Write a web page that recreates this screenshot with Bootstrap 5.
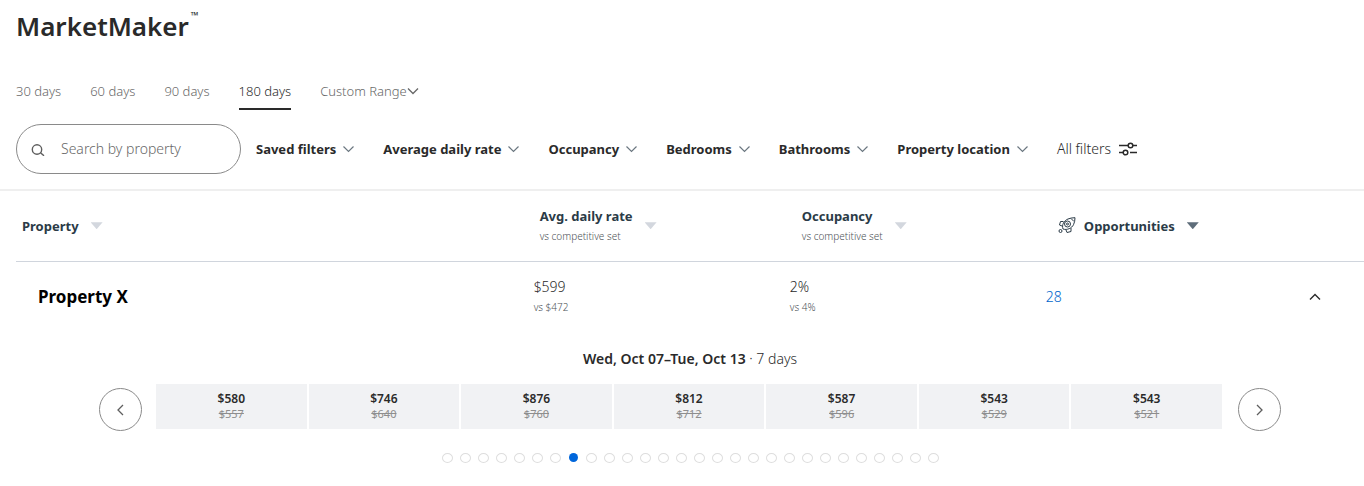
<!DOCTYPE html>
<html lang="en">
<head>
<meta charset="utf-8">
<meta name="viewport" content="width=device-width, initial-scale=1">
<title>MarketMaker</title>
<link href="https://cdn.jsdelivr.net/npm/bootstrap@5.3.0/dist/css/bootstrap.min.css" rel="stylesheet">
<style>
  body { font-family: "Noto Sans", "Open Sans", sans-serif; font-size: 14px; font-weight: 300; line-height: 20px; color: #2a2a2a; }
  svg { display: block; flex: none; fill: none; stroke: currentColor; }
  button { font: inherit; color: inherit; background: none; border: 0; padding: 0; }
  .page-head { padding-top: 10px; }
  .brand-title { font-size: 26px; font-weight: 600; line-height: 32px; }
  .brand-title sup { font-size: 10px; top: -17px; margin-left: 2px; font-weight: 400; }
  .range-tabs { gap: 29px; margin-top: 39px; font-size: 13px; color: #686868; }
  .range-tabs button { padding-bottom: 7px; border-bottom: 2px solid transparent; }
  .range-tabs .active { color: #2a2a2a; border-color: #2a2a2a; }
  .filter-bar { padding: 14px 16px 15px; border-bottom: 2px solid #efefef; gap: 29px; }
  .search-pill { width: 225px; height: 50px; margin-right: -14px; padding: 0 14px; gap: 16px; border: 1px solid #8a8a8a; color: #5e5e5e; }
  .search-pill input { font-weight: 300; color: inherit; outline: 0; }
  .search-pill input::placeholder { color: #686868; opacity: 1; }
  .filter-btn { font-size: 13px; font-weight: 700; gap: 7px; }
  .filter-btn svg { color: #6b7780; }
  .prop-table { table-layout: fixed; width: 100%; }
  .col-name { width: 38.4%; }
  .col-stat { width: 19%; }
  .prop-table thead th { height: 70px; padding: 0 0 0 6px; border-bottom: 1px solid #d0d5dd; font-size: 13px; color: #2b3b47; vertical-align: middle; }
  .prop-table thead th.inset { padding-left: 12px; }
  .th-label { gap: 12px; }
  .prop-table td, .prop-table tbody th { height: 72px; padding: 0; vertical-align: middle; }
  .prop-name { font-size: 17px; font-weight: 700; color: #000; padding-left: 22px !important; }
  .subtext { font-size: 10px; font-weight: 300; color: #4e5358; }
  .opp-link { color: #0066cc; }
  .caret-down { width: 12px; height: 7px; background: #d3d7de; clip-path: polygon(0 0, 100% 0, 50% 100%); }
  .caret-down.sorted { background: #5e6d7a; }
  .collapse-btn { margin-right: -5px; }
  .cal { padding: 0 83px; }
  .cal-title b { font-weight: 600; }
  .cal-row { margin-top: 15px; gap: 14px; }
  .round-btn { width: 43px; height: 43px; margin-top: 4px; border: 1px solid #8a8a8a; color: #5e5e5e; flex: none; }
  .cal-days { gap: 2px; margin-right: 2px; }
  .cal-day { height: 45px; padding-top: 7px; background: #f1f2f4; font-size: 12px; line-height: 16px; }
  .cal-day b { font-weight: 600; display: block; }
  .cal-day s { display: block; font-size: 11px; line-height: 14px; font-weight: 400; color: #8e8e8e; }
  .dots { gap: 7px; margin-top: 22px; }
  .dots button { width: 11px; height: 10px; border: 1px solid #dedede; border-radius: 50%; }
  .dots .active { background: #0066db; border: 0; width: 9px; height: 9px; margin: 0 1px; }
</style>
</head>
<body class="bg-white">
<header class="page-head px-3">
  <h1 class="brand-title m-0">MarketMaker<sup>™</sup></h1>
  <nav class="range-tabs d-flex" aria-label="Date range">
    <button type="button">30 days</button>
    <button type="button">60 days</button>
    <button type="button">90 days</button>
    <button type="button" class="active">180 days</button>
    <button type="button" class="d-flex align-items-center">Custom Range<svg width="12" height="8" viewBox="0 0 12 8" stroke-width="1.3"><path d="M1 1.5 6 6.5 11 1.5"/></svg></button>
  </nav>
</header>

<section class="filter-bar d-flex align-items-center">
  <label class="search-pill d-flex align-items-center rounded-pill flex-shrink-0">
    <svg width="14" height="14" viewBox="0 0 14 14" stroke-width="1.4"><circle cx="6" cy="7.500" r="4.700"/><path d="m9.500 10.800 3.500 3"/></svg>
    <input type="search" class="border-0 p-0 w-100 bg-transparent" placeholder="Search by property" aria-label="Search by property">
  </label>
  <button type="button" class="filter-btn d-flex align-items-center">Saved filters<svg width="11" height="8" viewBox="0 0 11 8" stroke-width="1.2"><path d="m.5 1.5 5 5 5-5"/></svg></button>
  <button type="button" class="filter-btn d-flex align-items-center">Average daily rate<svg width="11" height="8" viewBox="0 0 11 8" stroke-width="1.2"><path d="m.5 1.5 5 5 5-5"/></svg></button>
  <button type="button" class="filter-btn d-flex align-items-center">Occupancy<svg width="11" height="8" viewBox="0 0 11 8" stroke-width="1.2"><path d="m.5 1.5 5 5 5-5"/></svg></button>
  <button type="button" class="filter-btn d-flex align-items-center">Bedrooms<svg width="11" height="8" viewBox="0 0 11 8" stroke-width="1.2"><path d="m.5 1.5 5 5 5-5"/></svg></button>
  <button type="button" class="filter-btn d-flex align-items-center">Bathrooms<svg width="11" height="8" viewBox="0 0 11 8" stroke-width="1.2"><path d="m.5 1.5 5 5 5-5"/></svg></button>
  <button type="button" class="filter-btn d-flex align-items-center">Property location<svg width="11" height="8" viewBox="0 0 11 8" stroke-width="1.2"><path d="m.5 1.5 5 5 5-5"/></svg></button>
  <button type="button" class="d-flex align-items-center gap-2">All filters<svg width="18" height="14" viewBox="0 0 18 14" stroke-width="1.5"><path d="M0 3.5h9M14 3.5h4M0 10.5h4M11 10.5h7"/><circle cx="11.5" cy="3.5" r="2.3"/><circle cx="6.5" cy="10.5" r="2.3"/></svg></button>
</section>

<main class="ps-3">
  <table class="prop-table">
    <colgroup><col class="col-name"><col class="col-stat"><col class="col-stat"><col></colgroup>
    <thead>
      <tr>
        <th scope="col"><div class="th-label d-flex align-items-center">Property<span class="caret-down"></span></div></th>
        <th scope="col"><div class="th-label d-flex align-items-center"><div>Avg. daily rate<div class="subtext">vs competitive set</div></div><span class="caret-down"></span></div></th>
        <th scope="col" class="inset"><div class="th-label d-flex align-items-center"><div>Occupancy<div class="subtext">vs competitive set</div></div><span class="caret-down"></span></div></th>
        <th scope="col" class="inset"><div class="d-flex align-items-center gap-2">
          <svg width="18" height="18" viewBox="0 0 18 18" stroke-width="1"><path d="M5 12C3.500 8 6 3.500 10 2Q13 .7 17 .7q0 4-1.500 7C14 11 9 13.500 5 12ZM5.500 4.500 2.500 4.500 1.500 8l2.500 1M13 11v3.500L9 15.500 8 13M13 1.500l3 3"/><circle cx="9.500" cy="7" r="3"/><circle cx="9.500" cy="7" r="1"/><circle cx="2.500" cy="14" r="1.500"/></svg>
          Opportunities<span class="caret-down sorted ms-1"></span></div></th>
      </tr>
    </thead>
    <tbody>
      <tr>
        <th scope="row" class="prop-name">Property X</th>
        <td>$599<div class="subtext">vs $472</div></td>
        <td>2%<div class="subtext">vs 4%</div></td>
        <td><div class="d-flex align-items-center justify-content-between pe-5"><a href="#" class="opp-link text-decoration-none">28</a><button type="button" class="collapse-btn" aria-label="Collapse"><svg width="12" height="8" viewBox="0 0 12 8" stroke-width="1.4"><path d="m1 6.500 5-5 5 5"/></svg></button></div></td>
      </tr>
    </tbody>
  </table>

  <section class="cal">
    <div class="cal-title text-center pt-3"><b>Wed, Oct 07–Tue, Oct 13</b> · 7 days</div>
    <div class="cal-row d-flex">
      <button type="button" class="round-btn rounded-circle d-flex align-items-center justify-content-center" aria-label="Previous"><svg width="7" height="12" viewBox="0 0 7 12" stroke-width="1.3"><path d="m6 1-5 5 5 5"/></svg></button>
      <div class="cal-days d-flex flex-fill text-center">
        <div class="cal-day flex-fill"><b>$580</b><s>$557</s></div>
        <div class="cal-day flex-fill"><b>$746</b><s>$640</s></div>
        <div class="cal-day flex-fill"><b>$876</b><s>$760</s></div>
        <div class="cal-day flex-fill"><b>$812</b><s>$712</s></div>
        <div class="cal-day flex-fill"><b>$587</b><s>$596</s></div>
        <div class="cal-day flex-fill"><b>$543</b><s>$529</s></div>
        <div class="cal-day flex-fill"><b>$543</b><s>$521</s></div>
      </div>
      <button type="button" class="round-btn rounded-circle d-flex align-items-center justify-content-center" aria-label="Next"><svg width="7" height="12" viewBox="0 0 7 12" stroke-width="1.3"><path d="m1 1 5 5-5 5"/></svg></button>
    </div>
    <div class="dots d-flex justify-content-center" id="weekDots"></div>
  </section>
</main>
<script src="https://cdn.jsdelivr.net/npm/bootstrap@5.3.0/dist/js/bootstrap.bundle.min.js"></script>
<script>
  const dots = document.getElementById('weekDots');
  for (let i = 1; i <= 28; i++) {
    const dot = document.createElement('button');
    dot.type = 'button';
    dot.setAttribute('aria-label', 'Week ' + i);
    if (i === 8) dot.className = 'active';
    dots.append(dot);
  }
</script>
</body>
</html>
